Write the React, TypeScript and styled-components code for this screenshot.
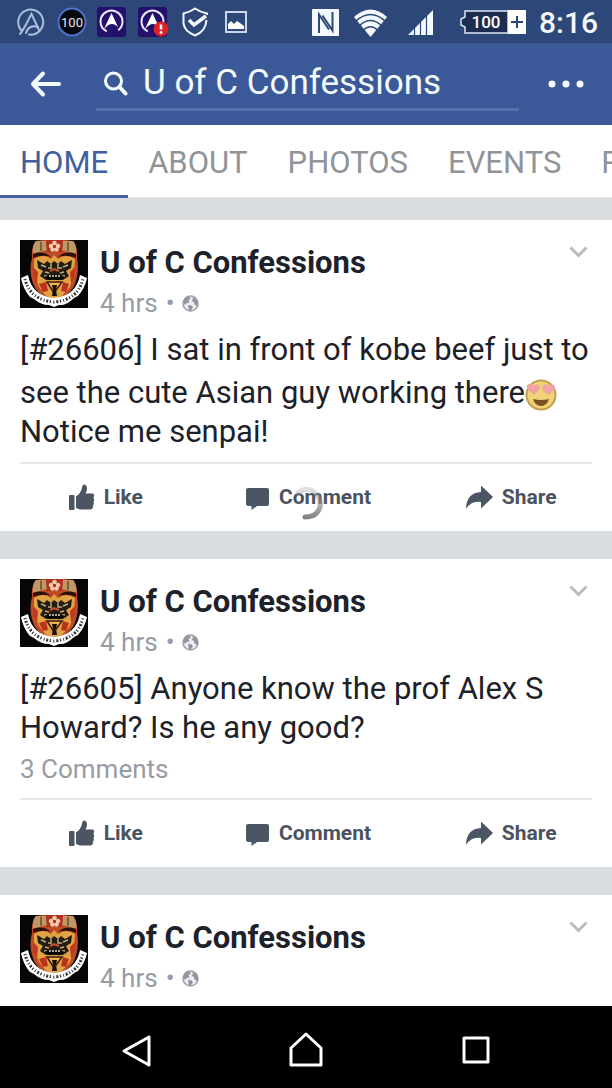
import React from "react";
import styled, { createGlobalStyle, keyframes } from "styled-components";

const GlobalStyle = createGlobalStyle`
  *, *::before, *::after { box-sizing: border-box; }
  html, body, #root { height: 100%; }
  body {
    margin: 0;
    background: #000;
    color: #1d2129;
    font-family: Roboto, "Liberation Sans", sans-serif;
  }
  svg { display: block; flex: none; }
  button, input { font: inherit; color: inherit; }
`;

const Screen = styled.div`
  height: 100%;
  display: flex;
  flex-direction: column;
  overflow: hidden;
`;

const StatusBar = styled.div`
  display: flex;
  align-items: center;
  justify-content: space-between;
  height: 43px;
  padding: 0 14px 0 10px;
  background: #2d4778;
  color: #f4f8ff;
`;

const Notifications = styled.div`
  display: flex;
  align-items: center;
`;

const NotificationSlot = styled.span`
  display: flex;
  justify-content: center;
  width: 41px;
`;

const Indicators = styled.div`
  display: flex;
  align-items: center;
  gap: 12px;
`;

const Clock = styled.time`
  font-size: 30px;
  font-weight: 500;
  line-height: 36px;
  padding-top: 2px;
`;

const AppBar = styled.header`
  display: flex;
  align-items: center;
  height: 82px;
  background: #3b5998;
  color: #f4fbff;
`;

const IconButton = styled.button`
  display: flex;
  align-items: center;
  justify-content: center;
  padding: 0;
  border: 0;
  background: none;
  cursor: pointer;
`;

const BackButton = styled(IconButton)`
  width: 96px;
  height: 80px;
  padding-right: 4px;
`;

const MoreButton = styled(IconButton)`
  width: 93px;
  height: 80px;
`;

const SearchBox = styled.label`
  flex: 1;
  min-width: 0;
  display: flex;
  align-items: center;
  gap: 14px;
  height: 54px;
  padding-left: 7px;
  border-bottom: 3px solid #5471ae;
`;

const SearchInput = styled.input`
  flex: 1;
  min-width: 0;
  height: 44px;
  padding: 0;
  border: 0;
  outline: 0;
  background: transparent;
  font-size: 35px;
  line-height: 44px;
`;

const Tabs = styled.nav`
  display: flex;
  height: 73px;
  flex: none;
  overflow: hidden;
  background: #fff;
`;

const Tab = styled.a<{ $active?: boolean }>`
  flex: none;
  padding: 18px 20px 0;
  font-size: 31px;
  line-height: 40px;
  text-decoration: none;
  color: ${(p) => (p.$active ? "#4060a0" : "#909498")};
  box-shadow: ${(p) => (p.$active ? "inset 0 -3px #45639f" : "inset 0 -1px #e8eaec")};
`;

const Feed = styled.main`
  position: relative;
  flex: 1;
  min-height: 0;
  overflow: hidden;
  display: flex;
  flex-direction: column;
  gap: 28px;
  padding-top: 22px;
  background: #dadde0;
`;

const Card = styled.article<{ $fill?: boolean }>`
  flex: ${(p) => (p.$fill ? "1 0 auto" : "none")};
  padding: 20px 20px 0;
  background: #fff;
`;

const CardHeader = styled.header`
  display: flex;
  gap: 12px;
`;

const Byline = styled.div`
  flex: 1;
  min-width: 0;
`;

const Author = styled.h2`
  margin: 0;
  padding-top: 4px;
  font-size: 31px;
  font-weight: 700;
  line-height: 38px;
`;

const Meta = styled.div`
  display: flex;
  align-items: center;
  gap: 8px;
  padding-top: 4px;
  font-size: 26px;
  line-height: 34px;
  color: #979ba3;
`;

const MenuButton = styled(IconButton)`
  width: 26px;
  height: 24px;
`;

const Message = styled.p`
  margin: 10px 0 0;
  font-size: 31px;
  line-height: 39px;
`;

const InlineEmoji = styled.svg`
  && {
    display: inline-block;
    width: 32px;
    height: 32px;
    margin-top: 10px;
    vertical-align: -8px;
  }
`;

const CommentCount = styled.a`
  display: block;
  padding-top: 4px;
  font-size: 26px;
  line-height: 36px;
  color: #979ba3;
  text-decoration: none;
`;

const Divider = styled.hr`
  height: 2px;
  margin: 11px 0 0;
  border: 0;
  background: #e6e8ea;
`;

const Actions = styled.footer`
  display: grid;
  grid-template-columns: repeat(3, 1fr);
  height: 67px;
  margin: 0 -20px;
  padding-left: 4px;
`;

const ActionButton = styled(IconButton)`
  gap: 9px;
  height: 66px;
  color: #4b535f;
  font-size: 21px;
  font-weight: 700;
`;

const spin = keyframes`
  to { transform: rotate(360deg); }
`;

const Spinner = styled.div`
  position: absolute;
  left: 50%;
  top: 288px;
  margin-left: -14px;
  &:hover { animation: ${spin} 1s linear infinite; }
`;

const SystemNav = styled.nav`
  display: flex;
  justify-content: center;
  gap: 86px;
  flex: none;
  height: 82px;
  padding-top: 4px;
  background: #000;
  color: #fff;
`;

const NavButton = styled(IconButton)`
  width: 84px;
  height: 80px;
`;

const Swoosh = () => (
  <g fill="none" stroke="currentColor" strokeWidth="2" strokeLinecap="round">
    <path d="M5 23 A12.500 12.500 0 1 1 13 27.500" />
    <path d="M4 27 C9 21 12 13 15.500 7 L23 23" />
    <path d="M10 26 Q13 17 22 20" />
  </g>
);

const AppBadge = ({ alert }: { alert?: boolean }) => (
  <svg width="31" height="30" viewBox="0 0 31 30">
    <rect width="29" height="30" rx="3" fill="#24106c" />
    <circle cx="14.500" cy="14.500" r="11" fill="none" stroke="#e8e9fa" strokeWidth="2" strokeDasharray="58 12" strokeDashoffset="-22" />
    <path d="M6.500 23 L14.500 6 L21 20 Q14 13 6.500 23Z" fill="#fff" />
    {alert && (
      <g>
        <circle cx="23" cy="22" r="7.500" fill="#df2427" />
        <path d="M23 17.500v5" stroke="#fff" strokeWidth="2.500" />
        <circle cx="23" cy="25.500" r="1.400" fill="#fff" />
      </g>
    )}
  </svg>
);

const Hundred = () => (
  <svg width="30" height="30" viewBox="0 0 30 30">
    <circle cx="15" cy="15" r="13.500" fill="#05070e" stroke="#4d74c9" strokeWidth="2" />
    <text x="15" y="20" textAnchor="middle" fontSize="13" fill="#e6ebf5" fontFamily="Roboto">100</text>
  </svg>
);

const ShieldIcon = () => (
  <svg width="28" height="30" viewBox="0 0 28 30" fill="none" stroke="currentColor">
    <path d="M26 8V6.500Q19 5 14 1.500 Q9 5 2.500 6.500V16Q3 24 14 28.500 Q25 24 25.500 13" strokeWidth="2" />
    <path d="M8 13l5 5L25 9" strokeWidth="3.500" />
  </svg>
);

const PictureIcon = () => (
  <svg width="22" height="22" viewBox="0 0 22 22">
    <rect x="1" y="1" width="20" height="20" fill="none" stroke="#cbd5e6" strokeWidth="2" />
    <path d="M3 18v-5l3-3 3 3 3-3 3 2 4 3v3z" fill="#fff" />
  </svg>
);

const NfcIcon = () => (
  <svg width="30" height="30" viewBox="0 0 30 30">
    <rect x="1" y="2" width="27" height="27" rx="1" fill="currentColor" />
    <path d="M8 26V7.500L18 22.500M21.500 5V23.500L11.500 8.500" fill="none" stroke="#2d4778" strokeWidth="2" />
  </svg>
);

const WifiIcon = () => (
  <svg width="38" height="30" viewBox="0 0 38 30">
    <path d="M1 10Q17.500 -5 34 10L17.500 30Z" fill="currentColor" />
    <g fill="none" stroke="#2d4778" strokeWidth="1.500">
      <path d="M3 14Q17.500 1 32 14" />
      <path d="M6 19Q17.500 8 29 19" />
      <path d="M10 23.500Q17.500 16 25 23.500" />
    </g>
  </svg>
);

const SignalIcon = () => (
  <svg width="32" height="30" viewBox="0 0 32 30">
    <path d="M5 28L30 3V28Z" fill="currentColor" />
    <path d="M11.500 20v9M17.500 12v17M23.500 8v21" stroke="#2d4778" strokeWidth="1.200" />
  </svg>
);

const BatteryIcon = () => (
  <svg width="80" height="30" viewBox="0 0 80 30">
    <path d="M18 4H61V26H18V20L14 18V12L18 10Z" fill="#1d2d4f" stroke="#dce5f3" strokeWidth="1.500" />
    <text x="39" y="21" textAnchor="middle" fontSize="17" fontWeight="500" fill="#fff" fontFamily="Roboto">100</text>
    <rect x="61" y="3" width="18" height="24" fill="#fff" />
    <path d="M64 15H76M70 9V21" stroke="#2d4778" strokeWidth="2" />
  </svg>
);

const BackIcon = () => (
  <svg width="32" height="28" viewBox="0 0 32 28" fill="none" stroke="currentColor" strokeWidth="4" strokeLinecap="round" strokeLinejoin="round">
    <path d="M13 3.500L3 14L13 24.500M3 14H29" />
  </svg>
);

const SearchIcon = () => (
  <svg width="26" height="26" viewBox="0 0 26 26" fill="none" stroke="currentColor">
    <circle cx="10.500" cy="11" r="8" strokeWidth="3" />
    <path d="M16.500 17L22.500 23.500" strokeWidth="4" strokeLinecap="round" />
  </svg>
);

const MoreIcon = () => (
  <svg width="36" height="8" viewBox="0 0 36 8" fill="currentColor">
    <circle cx="4" cy="4" r="3.500" />
    <circle cx="18" cy="4" r="3.500" />
    <circle cx="32" cy="4" r="3.500" />
  </svg>
);

const Crest = () => (
  <svg width="68" height="68" viewBox="0 0 68 68" role="img" aria-label="U of C Confessions crest">
    <rect width="68" height="68" fill="#070505" />
    <path d="M16 1Q34 -2 53 1Q58 6 57 18Q60 34 53 48Q45 58 34 63Q22 58 15 48Q8 34 12 18Q11 6 16 1Z" fill="#c04a26" />
    <path d="M16 1H26L27 10L13 14Q12 5 16 1ZM43 1H53Q57 5 56 14L42 10Z" fill="#bb9a68" />
    <path d="M21 2V11M48 2V11" stroke="#8a5b38" strokeWidth="2" />
    <path d="M26 0H43L42 12H27Z" fill="#b0301f" />
    <g fill="#f1cba9">
      <circle cx="34.500" cy="3" r="2.300" />
      <circle cx="31" cy="6" r="2.300" />
      <circle cx="38" cy="6" r="2.300" />
      <circle cx="32.500" cy="9.500" r="2.300" />
      <circle cx="36.500" cy="9.500" r="2.300" />
    </g>
    <circle cx="34.500" cy="6.500" r="1.500" fill="#b82a20" />
    <path d="M14 19Q24 13 31 19L34 15L38 19Q46 13 55 19L54 34L50 47L42 56L34 60L26 56L19 47L14 34Z" fill="#e0a242" />
    <path d="M13 14Q23 10 31 17Q22 14 13 18ZM56 14Q46 10 38 17Q47 14 56 18Z" fill="#2a100a" />
    <path d="M13 27L18 32L17 43L14 38ZM55 27L50 32L51 43L54 38Z" fill="#c0361f" />
    <path d="M19 44L26 42L28 51L23 52ZM49 44L43 42L41 51L46 52Z" fill="#b8321f" />
    <path d="M17 20L24 24L27 21L31 24L34 21L38 24L41 21L45 24L52 20L51 28L46 31L49 36L43 40H26L20 36L23 31L18 28Z" fill="#241c12" />
    <path d="M21 25L26 27M48 25L43 27M28 28H32M37 28H42M25 32L29 33M44 32L40 33M31 24V27M38 24V27M24 36H27M42 36H45" stroke="#b5b07c" strokeWidth="1.500" />
    <path d="M30 31L34 29L39 31" fill="none" stroke="#c8542c" strokeWidth="2" />
    <path d="M24 37Q34 32 45 37Q41 42 34 39Q28 42 24 37Z" fill="#080605" />
    <path d="M29 36H40" stroke="#e5dfc8" strokeWidth="1.500" strokeDasharray="2 1" />
    <path d="M27 42L34 53L42 42Z" fill="#edb44b" stroke="#3d1a0e" strokeWidth="1.500" />
    <path d="M32 45H37L36 50L37 56H32L33 50Z" fill="#1b0e08" />
    <path d="M1 38L8 35Q12 56 34 58Q56 56 60 35L67 38Q65 48 58 56L54 58Q46 66 39 65L34 67L29 65Q21 65 14 59L10 57Q3 49 1 38Z" fill="#fff" />
    <path d="M5 39Q10 60 34 62Q58 60 63 39" fill="none" stroke="#353535" strokeWidth="3" strokeDasharray="1 1.800 2 1.600 1.200 2.200" />
  </svg>
);

const GlobeIcon = () => (
  <svg width="17" height="17" viewBox="0 0 17 17">
    <circle cx="8.500" cy="8.500" r="7.500" fill="#eceef0" stroke="#9da1aa" strokeWidth="1.500" />
    <path d="M1.500 6Q3 2 7 1.500L9 3.500L6.500 5L7.500 7.500L4.500 8L3 10L1.500 8ZM10 2L14 4L16 8L15 11L12.500 9.500L12 7L9.500 6L11 4ZM6 10L9.500 10.500L11 12L9 15.500H7L6.500 13Z" fill="#8f949d" />
  </svg>
);

const ChevronIcon = () => (
  <svg width="20" height="14" viewBox="0 0 20 14" fill="none" stroke="#b9bbbf" strokeWidth="3">
    <path d="M1.500 2.500L9.500 10.500L17.500 2.500" />
  </svg>
);

const HeartEyes = () => (
  <InlineEmoji viewBox="0 0 32 32" role="img" aria-label="heart eyes">
    <circle cx="16" cy="16" r="14.500" fill="#f1d377" stroke="#c2a050" strokeWidth="2" />
    <path d="M9 16L3 11Q0 6 4 5Q7 4 9 7Q11 4 14 6Q16 9 13 12ZM23 16L18 12Q16 7 19.500 5.500Q22 4 24 7Q26 4 29 6Q31 8 28.500 12Z" fill="#f2a3a4" />
    <path d="M8 20Q16 22 24 20Q22 27 16 27Q10 27 8 20Z" fill="#7b5220" />
  </InlineEmoji>
);

const LikeIcon = () => (
  <svg width="27" height="27" viewBox="0 0 27 27" fill="#4b5563">
    <rect x="1" y="11" width="5.500" height="15" rx="1" />
    <path d="M8 12.500Q13 9 14 4Q14 .5 16.500 .5Q19 1 19 4.500Q19 7 17.500 9.500H25Q27 11 25.500 13.500Q27 15.500 25.500 17.500Q26.500 20 25 21.500Q25.500 25 22.500 25.500H12L8 24Z" />
  </svg>
);

const CommentIcon = () => (
  <svg width="25" height="25" viewBox="0 0 25 25" fill="#4b5563">
    <path d="M3 3H22Q24 3 24 5V19Q24 21 22 21H12L6.500 25V21H3Q1 21 1 19V5Q1 3 3 3Z" />
  </svg>
);

const ShareIcon = () => (
  <svg width="28" height="26" viewBox="0 0 28 26" fill="#4b5563">
    <path d="M16 1.500L28 13L16 24.500V18Q6 16.500 1 25Q1.500 8.500 16 8Z" />
  </svg>
);

interface PostData {
  id: string;
  body?: React.ReactNode;
  comments?: string;
}

const Post = ({ id, body, comments }: PostData) => (
  <Card $fill={!body}>
    <CardHeader>
      <Crest />
      <Byline>
        <Author>U of C Confessions</Author>
        <Meta>
          <span>4 hrs</span>
          <span>•</span>
          <GlobeIcon />
        </Meta>
      </Byline>
      <MenuButton aria-label="Post options"><ChevronIcon /></MenuButton>
    </CardHeader>
    {body && (
      <>
        <Message>{body}</Message>
        {comments && <CommentCount href={`#${id}`}>{comments}</CommentCount>}
        <Divider />
        <Actions>
          <ActionButton><LikeIcon />Like</ActionButton>
          <ActionButton><CommentIcon />Comment</ActionButton>
          <ActionButton><ShareIcon />Share</ActionButton>
        </Actions>
      </>
    )}
  </Card>
);

const posts: PostData[] = [
  {
    id: "p26606",
    body: (
      <>
        [#26606] I sat in front of kobe beef just to see the cute Asian guy working there<HeartEyes />
        <br />
        Notice me senpai!
      </>
    ),
  },
  {
    id: "p26605",
    body: "[#26605] Anyone know the prof Alex S Howard? Is he any good?",
    comments: "3 Comments",
  },
  { id: "p26604" },
];

const tabs = ["HOME", "ABOUT", "PHOTOS", "EVENTS", "POSTS"];

export default function App() {
  return (
    <Screen>
      <GlobalStyle />
      <StatusBar>
        <Notifications>
          <NotificationSlot>
            <svg width="30" height="30" viewBox="0 0 30 30" color="#aebfdd"><Swoosh /></svg>
          </NotificationSlot>
          <NotificationSlot><Hundred /></NotificationSlot>
          <NotificationSlot><AppBadge /></NotificationSlot>
          <NotificationSlot><AppBadge alert /></NotificationSlot>
          <NotificationSlot><ShieldIcon /></NotificationSlot>
          <NotificationSlot><PictureIcon /></NotificationSlot>
        </Notifications>
        <Indicators>
          <NfcIcon />
          <WifiIcon />
          <SignalIcon />
          <BatteryIcon />
          <Clock>8:16</Clock>
        </Indicators>
      </StatusBar>
      <AppBar>
        <BackButton aria-label="Back"><BackIcon /></BackButton>
        <SearchBox>
          <SearchIcon />
          <SearchInput aria-label="Search" defaultValue="U of C Confessions" />
        </SearchBox>
        <MoreButton aria-label="More"><MoreIcon /></MoreButton>
      </AppBar>
      <Tabs>
        {tabs.map((name, i) => (
          <Tab key={name} href={`#${name.toLowerCase()}`} $active={i === 0}>{name}</Tab>
        ))}
      </Tabs>
      <Feed>
        {posts.map((post) => <Post key={post.id} {...post} />)}
        <Spinner role="status" aria-label="Loading">
          <svg width="34" height="36" viewBox="0 0 34 36" fill="none" strokeWidth="5">
            <defs>
              <linearGradient id="fade" x1="0" y1="0" x2="0" y2="1">
                <stop offset="0" stopColor="#999" stopOpacity="0.3" />
                <stop offset="1" stopColor="#858585" />
              </linearGradient>
            </defs>
            <path d="M6 7Q13 1 21 5Q30 11 28 21Q25 31 13 31" stroke="url(#fade)" strokeLinecap="round" />
          </svg>
        </Spinner>
      </Feed>
      <SystemNav>
        <NavButton aria-label="Back">
          <svg width="32" height="34" viewBox="0 0 32 34" fill="none" stroke="currentColor" strokeWidth="3" strokeLinejoin="round">
            <path d="M4 18L29 4V32Z" />
          </svg>
        </NavButton>
        <NavButton aria-label="Home">
          <svg width="34" height="36" viewBox="0 0 34 36" fill="none" stroke="currentColor" strokeWidth="3" strokeLinejoin="round">
            <path d="M2 16L17 2L32 16V33H2Z" />
          </svg>
        </NavButton>
        <NavButton aria-label="Recent apps">
          <svg width="28" height="28" viewBox="0 0 28 28" fill="none" stroke="currentColor" strokeWidth="3" strokeLinejoin="round">
            <rect x="2" y="2" width="24" height="24" />
          </svg>
        </NavButton>
      </SystemNav>
    </Screen>
  );
}
